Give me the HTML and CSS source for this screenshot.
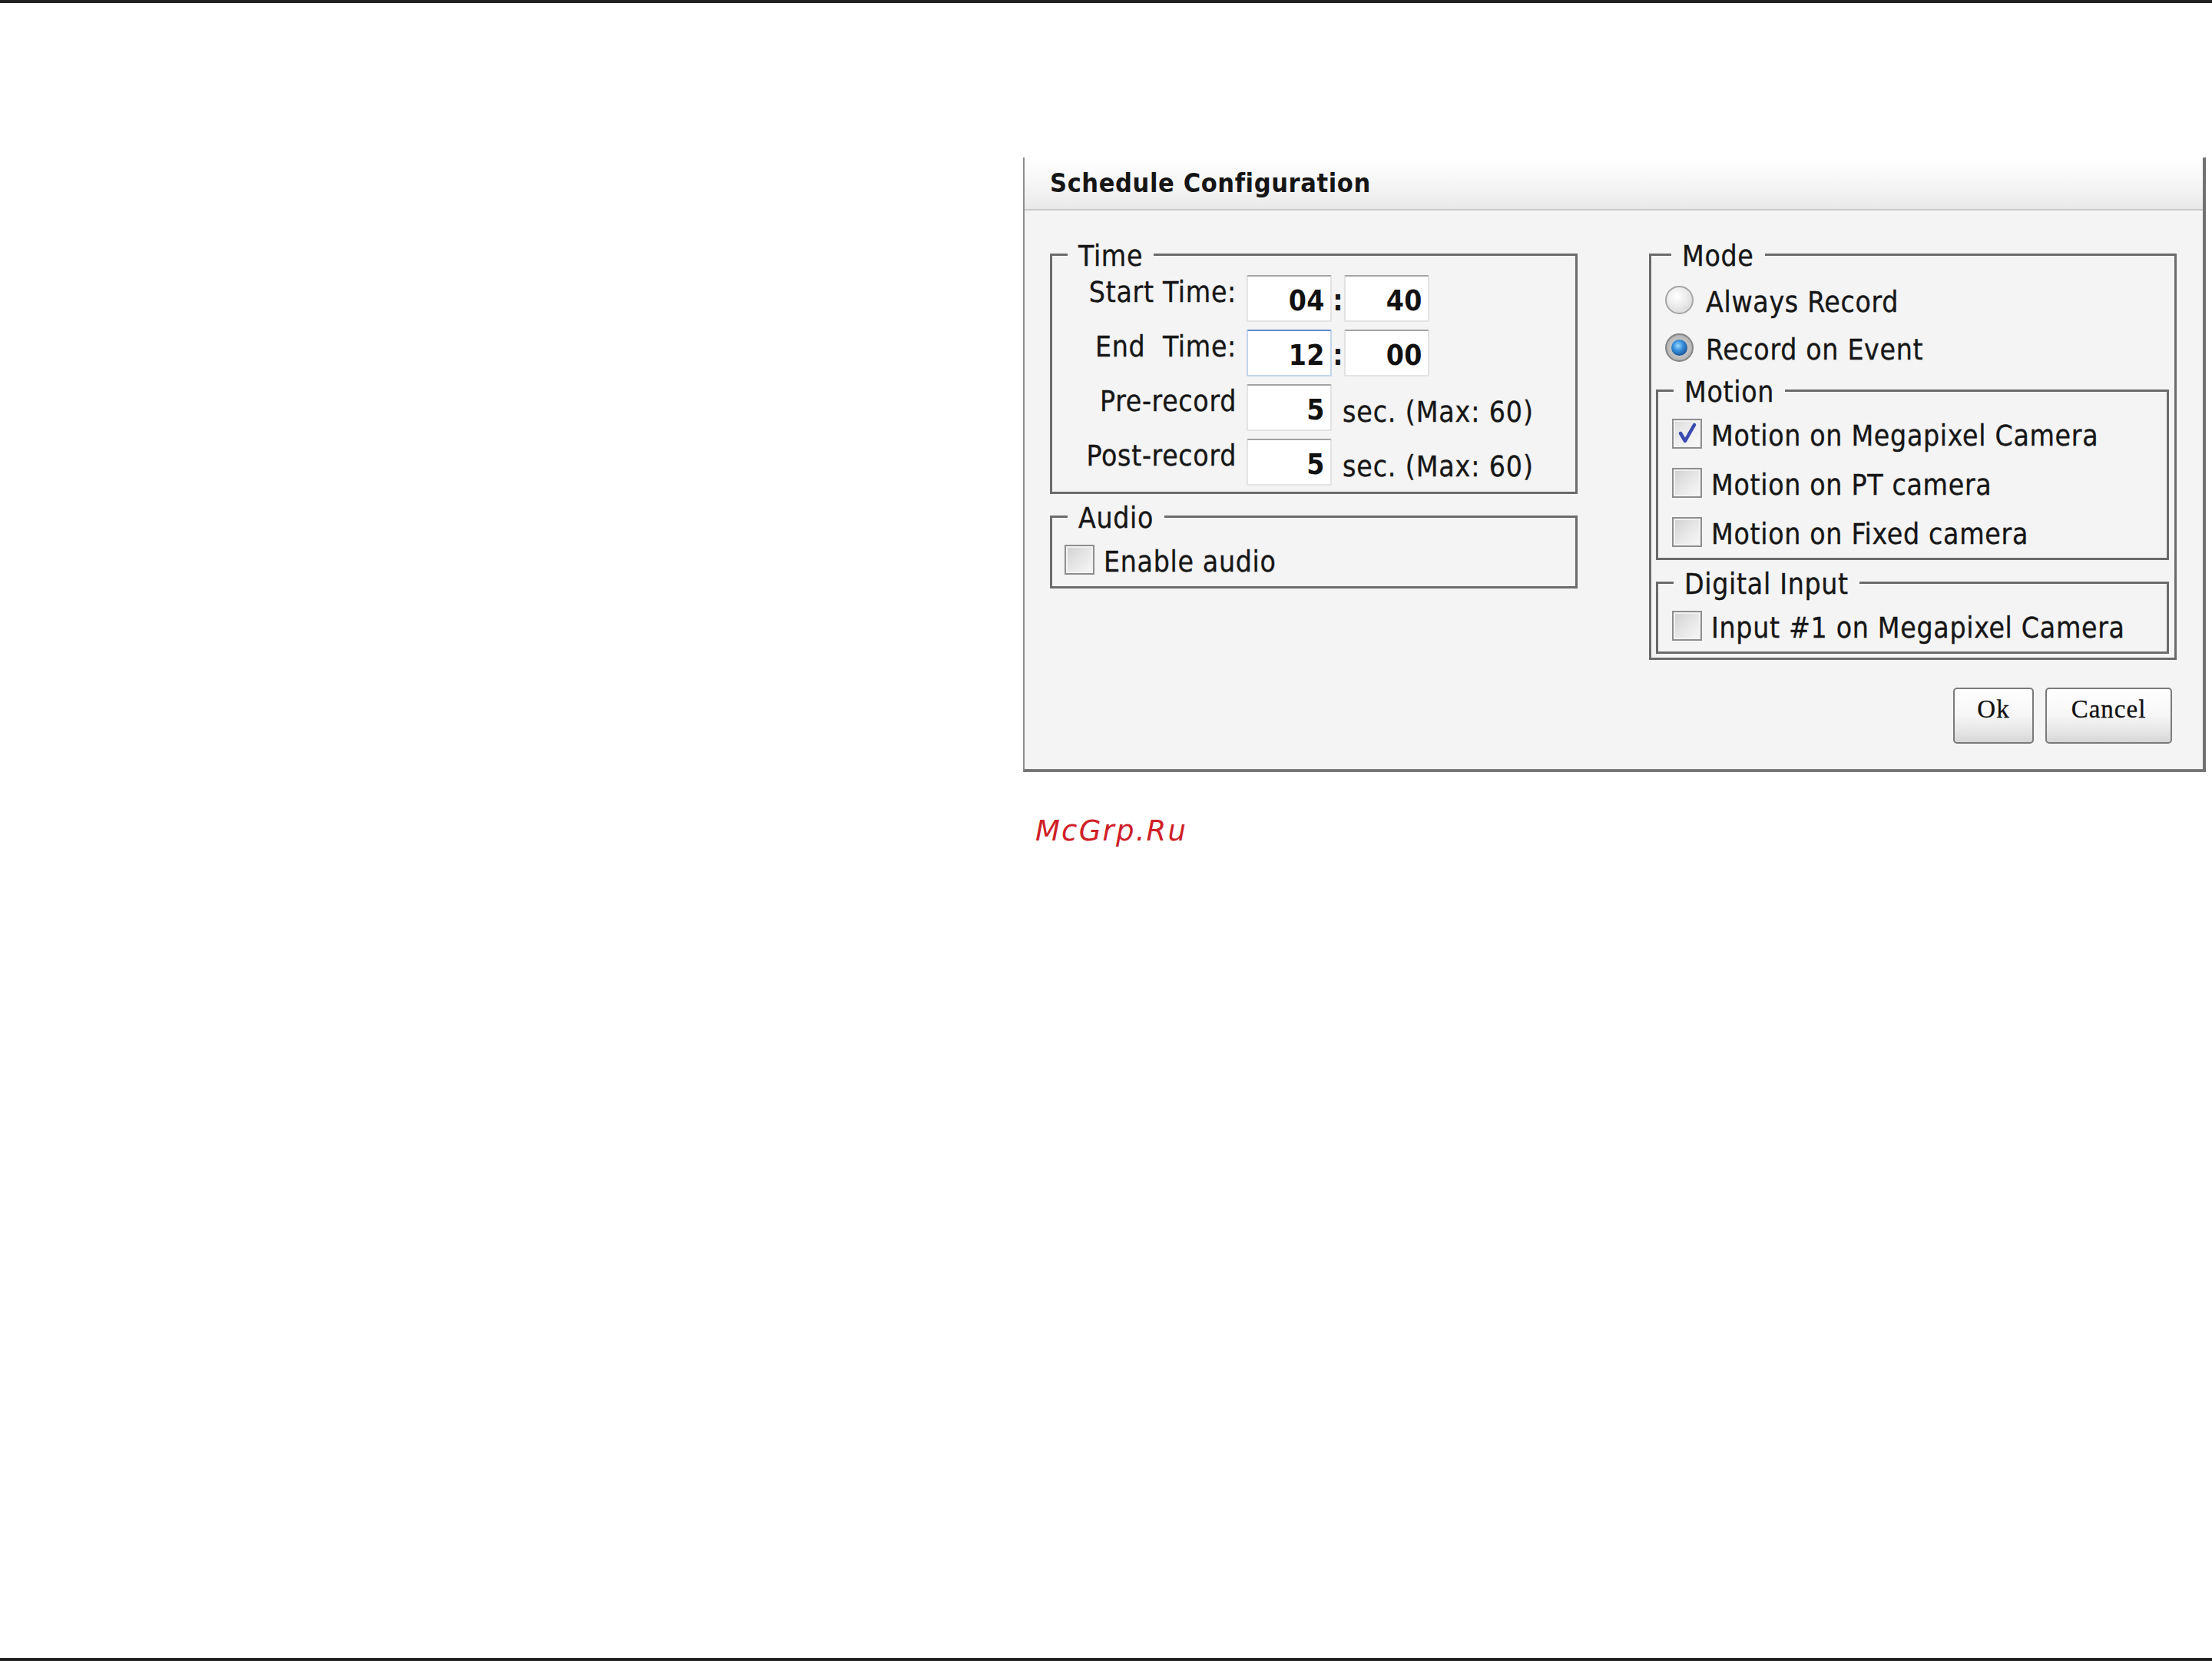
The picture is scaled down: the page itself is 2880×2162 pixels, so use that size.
FILE: index.html
```html
<!DOCTYPE html>
<html lang="en">
<head>
<meta charset="utf-8">
<title>Schedule Configuration</title>
<link rel="stylesheet" href="styles.css">
</head>
<body>
<div class="rule"></div>
<main class="page">
  <section class="dialog">
    <header class="dialog-head">
      <h1 class="dialog-title">Schedule Configuration</h1>
    </header>
    <div class="dialog-body">
      <div class="columns">
        <div class="col">
          <fieldset class="group time">
            <legend>Time</legend>
            <div class="time-rows">
              <div class="trow">
                <label class="lbl">Start Time:</label>
                <input class="num" type="text" value="04" readonly>
                <span class="colon">:</span>
                <input class="num" type="text" value="40" readonly>
              </div>
              <div class="trow">
                <label class="lbl">End&nbsp; Time:</label>
                <input class="num focus" type="text" value="12" readonly>
                <span class="colon">:</span>
                <input class="num" type="text" value="00" readonly>
              </div>
              <div class="trow">
                <label class="lbl">Pre-record</label>
                <input class="num" type="text" value="5" readonly>
                <span class="unit">sec. (Max: 60)</span>
              </div>
              <div class="trow">
                <label class="lbl">Post-record</label>
                <input class="num" type="text" value="5" readonly>
                <span class="unit">sec. (Max: 60)</span>
              </div>
            </div>
          </fieldset>
          <fieldset class="group audio">
            <legend>Audio</legend>
            <div class="check-list">
              <div class="opt"><span class="cb"></span><span class="opt-text">Enable audio</span></div>
            </div>
          </fieldset>
        </div>
        <div class="col">
          <fieldset class="group mode">
            <legend>Mode</legend>
            <div class="radio-list">
              <div class="opt"><span class="radio"></span><span class="opt-text">Always Record</span></div>
              <div class="opt"><span class="radio on"><span class="dot"></span></span><span class="opt-text">Record on Event</span></div>
            </div>
            <fieldset class="group sub motion">
              <legend>Motion</legend>
              <div class="check-list">
                <div class="opt"><span class="cb checked"><svg viewBox="0 0 35 35" width="35" height="35"><path d="M9 17 L15 27 L27 6" fill="none" stroke="#3a4bb0" stroke-width="4.5" stroke-linecap="round" stroke-linejoin="round"/></svg></span><span class="opt-text">Motion on Megapixel Camera</span></div>
                <div class="opt"><span class="cb"></span><span class="opt-text">Motion on PT camera</span></div>
                <div class="opt"><span class="cb"></span><span class="opt-text">Motion on Fixed camera</span></div>
              </div>
            </fieldset>
            <fieldset class="group sub digital">
              <legend>Digital Input</legend>
              <div class="check-list">
                <div class="opt"><span class="cb"></span><span class="opt-text">Input #1 on Megapixel Camera</span></div>
              </div>
            </fieldset>
          </fieldset>
        </div>
      </div>
      <div class="buttons">
        <button class="btn btn-ok" type="button">Ok</button>
        <button class="btn btn-cancel" type="button">Cancel</button>
      </div>
    </div>
  </section>
  <p class="watermark">McGrp.Ru</p>
</main>
<div class="rule rule-bottom"></div>
</body>
</html>
```

FILE: styles.css
```css
:root {
  --ui: "DejaVu Sans Condensed", "DejaVu Sans", sans-serif;
  --line: #6b6b6b;
  --text: #161616;
}

html, body {
  margin: 0;
  padding: 0;
}

body {
  background: #ffffff;
  min-height: 100vh;
  display: flex;
  flex-direction: column;
  font-family: var(--ui);
  font-stretch: condensed;
  color: var(--text);
}

.rule {
  flex: none;
  height: 4px;
  background: #222222;
}

.rule-bottom {
  margin-top: auto;
}

.page {
  flex: none;
  padding-top: 201px;
}

/* dialog */
.dialog {
  box-sizing: border-box;
  width: 1540px;
  margin-left: 1332px;
  background: #f4f4f4;
  border-left: 2px solid #8c8c8c;
  border-right: 4px solid #717171;
  border-bottom: 4px solid #777777;
}

.dialog-head {
  height: 67px;
  border-bottom: 2px solid #c9c9c9;
  background: linear-gradient(#ffffff 0%, #f7f7f7 45%, #e9e9e9 100%);
  padding-left: 33px;
}

.dialog-title {
  margin: 0;
  font-family: var(--ui);
  font-size: 34px;
  font-weight: bold;
  letter-spacing: 0.6px;
  line-height: 67px;
  color: #151515;
}

.dialog-body {
  padding: 37px 0 33px 0;
}

.columns {
  display: flex;
  gap: 93px;
  padding: 0 34px 0 33px;
  align-items: flex-start;
}

.col {
  width: 687px;
  flex: none;
  display: flex;
  flex-direction: column;
}

/* group boxes */
.group {
  margin: 0;
  padding: 0;
  min-width: 0;
  border: 3px solid var(--line);
}

.group > legend {
  margin-left: 20px;
  padding: 6px 14px 0 14px;
  font-size: 37px;
  line-height: 34px;
  letter-spacing: 0.7px;
  color: var(--text);
  -webkit-text-stroke: 0.35px currentColor;
}

.time {
  padding: 7px 0 8px 0;
}

.audio {
  margin-top: 9px;
  padding: 16px 0 15px 0;
}

.mode {
  padding: 0 7px 5px 6px;
}

.motion {
  margin-top: 16px;
  padding: 16px 0 14px 0;
}

.digital {
  margin-top: 9px;
  padding: 16px 0 14px 0;
}

/* time rows */
.time-rows {
  display: flex;
  flex-direction: column;
  gap: 10px;
}

.trow {
  display: flex;
  align-items: flex-start;
  height: 61px;
}

.lbl {
  width: 240px;
  margin-right: 13px;
  margin-top: 3px;
  text-align: right;
  font-size: 37px;
  line-height: 40px;
  letter-spacing: 0.7px;
  white-space: nowrap;
  -webkit-text-stroke: 0.35px currentColor;
}

.num {
  box-sizing: border-box;
  width: 111px;
  height: 61px;
  margin: 0;
  padding: 6px 7px 0 0;
  border: 2px solid #e3e3e3;
  border-top-color: #a3a3a3;
  border-radius: 2px;
  background: #ffffff;
  font-family: var(--ui);
  font-stretch: condensed;
  font-size: 37px;
  font-weight: bold;
  letter-spacing: 0.5px;
  color: #111111;
  text-align: right;
  outline: none;
}

.num.focus {
  border-color: #c3d5ea;
  border-top-color: #5c8ccb;
}

.colon {
  width: 16px;
  text-align: center;
  font-size: 37px;
  font-weight: bold;
  line-height: 61px;
  padding-top: 3px;
}

.unit {
  margin-left: 14px;
  margin-top: 17px;
  font-size: 37px;
  line-height: 40px;
  letter-spacing: 0.9px;
  white-space: nowrap;
  -webkit-text-stroke: 0.35px currentColor;
}

/* options */
.radio-list {
  display: flex;
  flex-direction: column;
  gap: 22px;
  padding: 19px 0 0 12px;
}

.check-list {
  display: flex;
  flex-direction: column;
  gap: 24px;
  padding-left: 18px;
}

.audio .check-list {
  padding-left: 16px;
}

.opt {
  display: flex;
  align-items: center;
  height: 40px;
}

.opt-text {
  padding-top: 7px;
  font-size: 37px;
  line-height: 33px;
  letter-spacing: 0.7px;
  white-space: nowrap;
  -webkit-text-stroke: 0.35px currentColor;
}

.radio {
  box-sizing: border-box;
  flex: none;
  width: 37px;
  height: 37px;
  margin-right: 16px;
  border-radius: 50%;
  border: 2px solid #a5a5a5;
  background: radial-gradient(circle at 40% 35%, #ffffff 0%, #ececec 45%, #cfcfcf 100%);
  display: flex;
  align-items: center;
  justify-content: center;
}

.radio.on {
  border-color: #858585;
  background: radial-gradient(circle at 50% 50%, #d9d9d9 0%, #bcbcbc 60%, #959595 100%);
}

.radio .dot {
  width: 21px;
  height: 21px;
  border-radius: 50%;
  background: radial-gradient(circle at 42% 38%, #9fd8ff 0%, #3a92df 35%, #154f8f 80%, #0e3a6d 100%);
}

.cb {
  box-sizing: border-box;
  flex: none;
  width: 39px;
  height: 39px;
  margin-right: 12px;
  border: 2px solid #8e8e8e;
  background: linear-gradient(135deg, #d0d0d0 0%, #e4e4e4 45%, #f8f8f8 100%);
  box-shadow: inset 0 0 0 2px #f2f2f2;
  display: flex;
  align-items: center;
  justify-content: center;
}

.cb.checked {
  background: linear-gradient(135deg, #dcdcdc 0%, #eeeeee 50%, #fafafa 100%);
}

.cb svg {
  display: block;
}

/* buttons */
.buttons {
  display: flex;
  justify-content: flex-end;
  gap: 15px;
  margin-top: 36px;
  padding-right: 40px;
}

.btn {
  box-sizing: border-box;
  height: 73px;
  margin: 0;
  padding: 8px 0 0 0;
  border: 2px solid #7a7a7a;
  border-radius: 5px;
  background: linear-gradient(#ffffff 0%, #f6f6f6 50%, #e2e2e2 85%, #d6d6d6 100%);
  font-family: "Liberation Serif", serif;
  font-size: 33px;
  line-height: 36px;
  letter-spacing: 1px;
  color: #111111;
  -webkit-text-stroke: 0.3px currentColor;
  display: flex;
  justify-content: center;
  align-items: flex-start;
}

.btn-ok {
  width: 105px;
}

.btn-cancel {
  width: 165px;
}

/* watermark */
.watermark {
  margin: 55px 0 0 1348px;
  font-family: "DejaVu Sans", sans-serif;
  font-stretch: normal;
  font-style: italic;
  font-size: 37px;
  line-height: 44px;
  letter-spacing: 2.2px;
  color: #cf2027;
}
```
